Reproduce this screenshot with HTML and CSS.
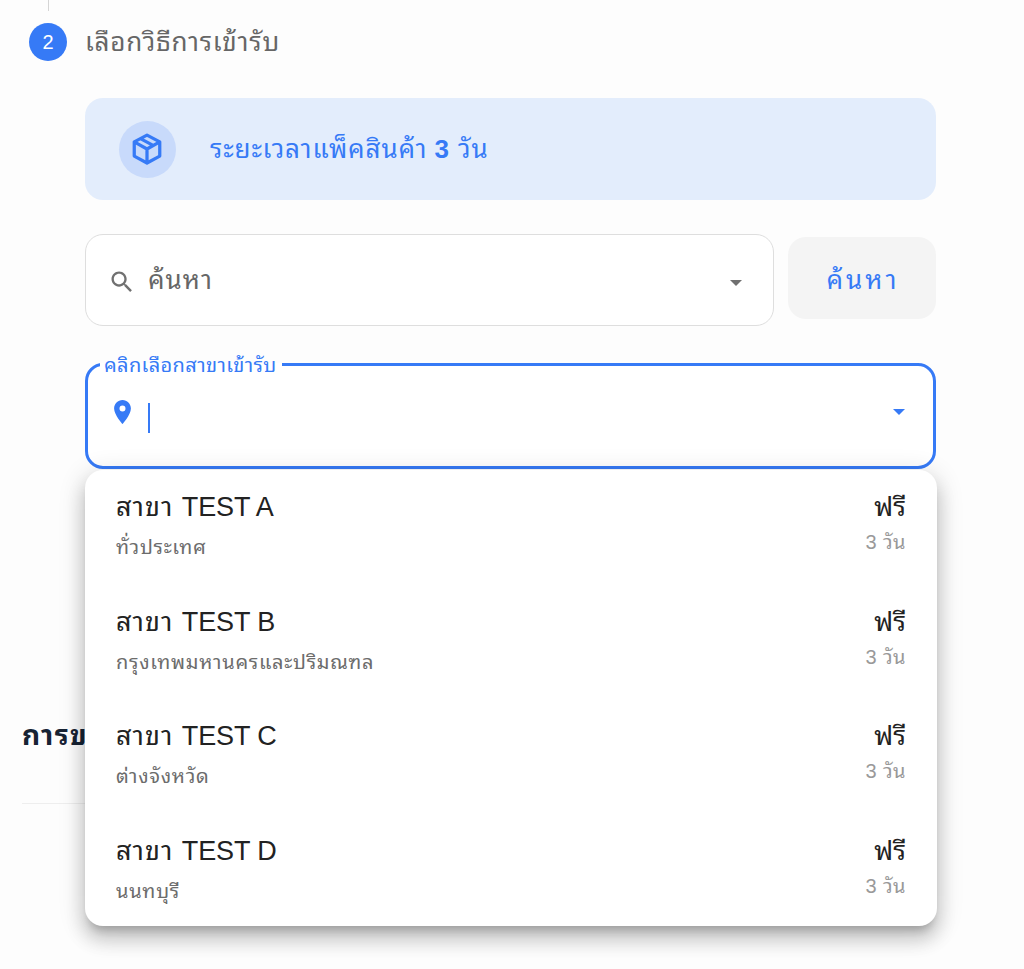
FILE: index.html
```html
<!DOCTYPE html>
<html lang="th">
<head>
<meta charset="utf-8">
<title>เลือกวิธีการเข้ารับ</title>
<link rel="stylesheet" href="styles.css">
</head>
<body>
<main class="page">
  <div class="connector"></div>
  <header class="step">
    <span class="step-number">2</span>
    <span class="step-label">เลือกวิธีการเข้ารับ</span>
  </header>
  <section class="content">
    <div class="notice">
      <span class="notice-icon">
        <svg width="34" height="34" viewBox="0 0 24 24" fill="none" stroke="currentColor" stroke-width="2.300" stroke-linejoin="round"><path d="M12 2.200 21 7v10l-9 4.900L3 17V7zM3 7l9 5 9-5M12 12v10M7.400 4.700l9.200 4.900"/></svg>
      </span>
      <span class="notice-text">ระยะเวลาแพ็คสินค้า <b>3</b> วัน</span>
    </div>
    <div class="search-row">
      <div class="search-field">
        <svg class="search-icon" viewBox="0 0 24 24" fill="currentColor"><path d="M15.500 14h-.79l-.28-.27C15.410 12.590 16 11.110 16 9.500 16 5.910 13.090 3 9.500 3S3 5.910 3 9.500 5.910 16 9.500 16c1.610 0 3.090-.59 4.230-1.570l.27.28v.79l5 4.990L20.490 19l-4.990-5zm-6 0C7.010 14 5 11.990 5 9.500S7.010 5 9.500 5 14 7.010 14 9.500 11.990 14 9.500 14z"/></svg>
        <span class="search-text">ค้นหา</span>
        <svg class="arrow" viewBox="0 0 12 6" fill="currentColor"><path d="M0 0h12L6 6z"/></svg>
      </div>
      <button class="search-button"><span>ค้นหา</span></button>
    </div>
    <div class="branch">
      <fieldset class="branch-field">
        <legend class="branch-legend"><span>คลิกเลือกสาขาเข้ารับ</span></legend>
        <div class="branch-body">
          <svg class="pin" viewBox="5 2 14 20" fill="currentColor"><path d="M12 2C8.130 2 5 5.130 5 9c0 5.250 7 13 7 13s7-7.750 7-13c0-3.870-3.130-7-7-7zm0 9.500a2.500 2.500 0 0 1 0-5 2.500 2.500 0 0 1 0 5z"/></svg>
          <span class="caret"></span>
          <svg class="arrow" viewBox="0 0 12 6" fill="currentColor"><path d="M0 0h12L6 6z"/></svg>
        </div>
      </fieldset>
      <ul class="menu">
        <li class="option"><div><div class="name">สาขา <span class="latin">TEST A</span></div><div class="area">ทั่วประเทศ</div></div><div class="cost"><div class="price">ฟรี</div><div class="days">3 วัน</div></div></li>
        <li class="option"><div><div class="name">สาขา <span class="latin">TEST B</span></div><div class="area">กรุงเทพมหานครและปริมณฑล</div></div><div class="cost"><div class="price">ฟรี</div><div class="days">3 วัน</div></div></li>
        <li class="option"><div><div class="name">สาขา <span class="latin">TEST C</span></div><div class="area">ต่างจังหวัด</div></div><div class="cost"><div class="price">ฟรี</div><div class="days">3 วัน</div></div></li>
        <li class="option"><div><div class="name">สาขา <span class="latin">TEST D</span></div><div class="area">นนทบุรี</div></div><div class="cost"><div class="price">ฟรี</div><div class="days">3 วัน</div></div></li>
      </ul>
    </div>
  </section>
  <section class="shipping"><h2>การข</h2></section>
</main>
</body>
</html>
```
FILE: styles.css
```css
* { box-sizing: border-box; }
body { margin: 0; background: #fdfdfd; font-family: "Liberation Sans", "Noto Sans Thai Looped", "Loma", "Garuda", "Waree", "Noto Sans Thai", sans-serif; color: #222; }
.page { height: 969px; overflow: hidden; }
.connector { width: 1px; height: 11px; margin-left: 48px; background: #d5d5d5; }
.step { display: flex; align-items: center; height: 39px; margin: 11px 0 0 29px; gap: 18px; }
.step-number { width: 38px; height: 38px; border-radius: 50%; background: #367af6; color: #fff; font-size: 20px; line-height: 38px; text-align: center; }
.step-label { font-size: 26px; line-height: 38px; color: #666; white-space: nowrap; letter-spacing: .8px; }
.content { width: 851px; margin: 37px 0 0 85px; }
.notice { display: flex; align-items: center; height: 102px; padding-left: 34px; border-radius: 18px; background: #e3edfc; color: #367af6; }
.notice-icon { display: flex; align-items: center; justify-content: center; width: 57px; height: 57px; padding-right: 1px; border-radius: 50%; background: #c8dafb; }
.notice-text { margin-left: 34px; font-size: 26px; line-height: 40px; white-space: nowrap; letter-spacing: .9px; }
.notice-text b { margin-left: -1px; }
.search-row { display: flex; align-items: center; gap: 14px; margin-top: 34px; height: 92px; }
.search-field { display: flex; align-items: center; width: 689px; height: 92px; padding: 0 31px 0 22px; border: 1px solid #dedede; border-radius: 18px; background: #fff; color: #707070; }
.search-icon { width: 28px; height: 28px; margin-top: 4px; }
.search-text { margin-left: 12px; font-size: 26px; line-height: 40px; color: #666; letter-spacing: 1px; }
.arrow { width: 12px; height: 6px; margin-left: auto; margin-top: 6px; }
.search-button { width: 148px; height: 82px; margin: 0 0 4px; padding: 0 0 3px 2px; border: 0; border-radius: 18px; background: #f4f4f4; color: #367af6; font: inherit; font-size: 26px; letter-spacing: 3px; }
.branch { position: relative; margin-top: 29px; }
.branch-field { height: 114px; margin: 0; padding: 0 29px 0 12px; border: 3px solid #367af6; border-radius: 18px; color: #367af6; background: #fff; min-width: 0; }
.branch-legend { width: 182px; height: 18px; padding: 0 4px; font-size: 20px; line-height: 20px; white-space: nowrap; letter-spacing: .37px; }
.branch-body { display: flex; align-items: center; height: 78px; padding-left: 14px; }
.pin { width: 17px; height: 24px; }
.caret { width: 2px; height: 30px; margin: 12px 0 0 17px; background: #367af6; }
.branch .arrow { margin-top: 0; margin-right: -1px; }
.menu { position: absolute; z-index: 2; top: 115px; left: 0; width: 852px; height: 456px; margin: 0; padding: 15px 31px 0; list-style: none; border-radius: 18px; background: #fff; box-shadow: 0 9px 9px -5px rgba(0,0,0,.2), 0 14px 18px 2px rgba(0,0,0,.14), 0 5px 25px 4px rgba(0,0,0,.12); }
.option { display: flex; justify-content: space-between; height: 114.500px; white-space: nowrap; }
.name { font-size: 27px; line-height: 44px; letter-spacing: 1px; }
.latin { letter-spacing: -.1px; }
.area { font-size: 20px; line-height: 36px; color: #6c6c6c; letter-spacing: .7px; }
.cost { text-align: right; }
.price { font-size: 27px; line-height: 44px; }
.days { font-size: 20px; line-height: 26px; color: #999; letter-spacing: .4px; }
.shipping { width: 880px; height: 100px; margin: 235px 0 0 22px; border-bottom: 1px solid #eee; }
.shipping h2 { margin: 0; padding-top: 12px; font-size: 28px; line-height: 40px; font-weight: 700; color: #172334; letter-spacing: 1.300px; }
```
